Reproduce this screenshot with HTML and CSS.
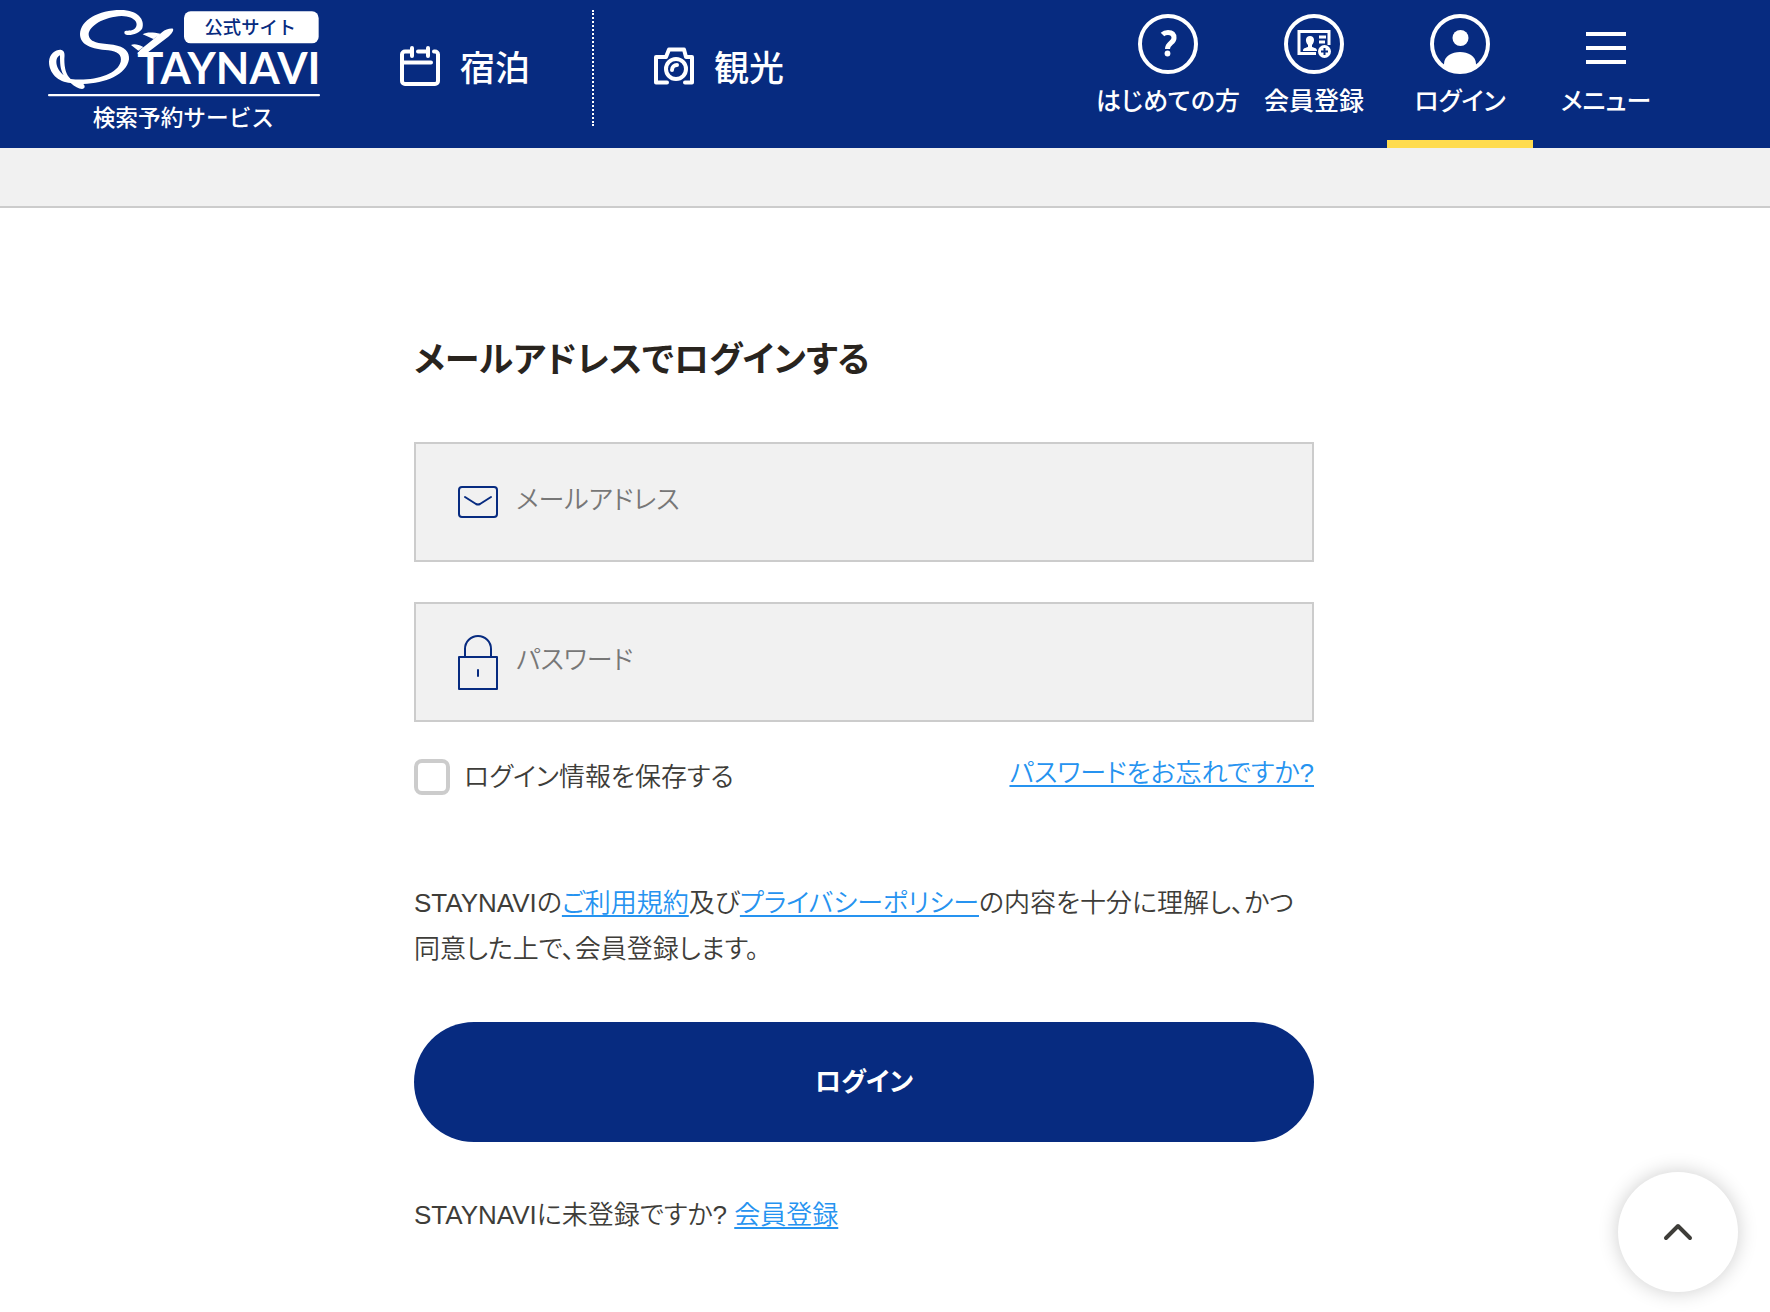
FILE: index.html
```
<!DOCTYPE html>
<html lang="ja">

<head>
  <meta charset="UTF-8" />
  <meta name="viewport" content="width=device-width, initial-scale=1" />
  <title>ログイン | STAYNAVI</title>
  <link rel="stylesheet" href="styles.css">
</head>

<body>
  <header class="header">
    <a class="logo" href="#">
      <svg viewBox="54 30 816 390" role="img" aria-label="STAYNAVI 検索予約サービス">
        <path fill-rule="evenodd" d="M283 98C283 88 300 96 312 88C330 74 318 49 275 48C222 50 176 78 176 104C178 130 215 130 250 134C285 140 299 155 297 178C290 225 225 250 160 252C166 258 166 266 156 267C146 267 134 260 122 249C85 246 57 220 57 185C58 160 78 148 92 149C106 152 104 165 103 178C103 205 108 225 122 237C185 245 262 225 272 185C277 165 262 154 235 151C185 147 150 135 150 102C152 60 205 30 272 30C325 30 345 60 337 85C328 105 283 112 283 98ZM90 166C74 172 74 204 101 226C90 208 90 188 90 166Z" />
        <path d="M429 86C420 84 405 89 397 96L330 150L322 162L350 160L414 111C424 102 432 92 429 86ZM338 103C350 95 370 97 391 101L370 117ZM303 135C312 130 325 133 340 141L325 152Z" />
        <rect x="462" y="34" width="404" height="96" rx="20" />
        <text class="logo-badge" x="661" y="102" text-anchor="middle">公式サイト</text>
        <text class="logo-name" x="322" y="251">TAYNAVI</text>
        <rect x="54" y="282" width="816" height="7" rx="3" />
        <text class="logo-sub" x="460" y="377" text-anchor="middle">検索予約サービス</text>
      </svg>
    </a>

    <nav class="nav">
      <a href="#">
        <svg class="nav-icon" viewBox="0 0 40 40">
          <path d="M9 5.500H5a3 3 0 0 0-3 3V35a3 3 0 0 0 3 3h30a3 3 0 0 0 3-3V8.500a3 3 0 0 0-3-3h-1M18 5.500h8M12 2v8M28 2v8M12 5.500H9M26 5.500h2M3 16.500h28" />
        </svg>
        宿泊
      </a>
      <a href="#">
        <svg class="nav-icon" viewBox="0 0 40 40">
          <path d="M13 36.500H2V11h10l3-7.500h15l2 7.500h6v25.500h-7" />
          <circle cx="22" cy="23" r="10" />
          <path d="M18 24a5 5 0 0 1 5-5" />
        </svg>
        観光
      </a>
    </nav>

    <ul class="menu">
      <li>
        <a href="#">
          <svg class="menu-icon" viewBox="0 0 60 60">
            <circle cx="30" cy="30" r="28" />
            <path class="mark" d="M24.500 20.500c2-2 4-2 5.500-2 4 0 6 2 6 5.500 0 5-6.500 5-6.500 11" />
            <circle class="fill" cx="29.500" cy="39.500" r="2.900" />
          </svg>
          はじめての方
        </a>
      </li>
      <li>
        <a href="#">
          <svg class="menu-icon" viewBox="0 0 60 60">
            <circle cx="30" cy="30" r="28" />
            <path class="thin" d="M32 39.500H15V17.500h30V31M35 23h7M35 28h6" />
            <path class="fill" d="M26 22c5 0 5 6 2 9v2c3 1 5 1 5 4H19c0-3 2-3 5-4v-2c-3-3-3-9 2-9z" />
            <circle class="fill" cx="40.500" cy="37.500" r="6.500" />
            <path class="plus" d="M40.500 34v7M37 37.500h7" />
          </svg>
          会員登録
        </a>
      </li>
      <li class="active">
        <a href="#">
          <svg class="menu-icon" viewBox="0 0 60 60">
            <circle cx="30" cy="30" r="28" />
            <circle class="fill" cx="30.500" cy="24" r="8" />
            <path class="fill" d="M14 52v-2c0-8 8-12 16-12s16 4 16 12v2c-9 9-23 9-32 0z" />
          </svg>
          ログイン
        </a>
      </li>
      <li>
        <button type="button">
          <svg class="menu-icon" viewBox="0 0 60 60">
            <path d="M10 20h40M10 34h40M10 48h40" />
          </svg>
          メニュー
        </button>
      </li>
    </ul>
  </header>

  <div class="breadcrumb"></div>

  <main class="main">
    <form class="login">
      <h1>メールアドレスでログインする</h1>

      <label class="field">
        <svg width="40" height="56" viewBox="0 0 40 56">
          <rect x="1" y="13" width="38" height="30" rx="3" />
          <path d="M7 23l11 7q2 1 4 0l11-7" />
        </svg>
        <input type="email" placeholder="メールアドレス" aria-label="メールアドレス">
      </label>

      <label class="field">
        <svg width="40" height="56" viewBox="0 0 40 56">
          <rect x="1" y="23" width="38" height="32" />
          <path d="M7 23v-8a13 13 0 0 1 26 0v8M20 36v6" />
        </svg>
        <input type="password" placeholder="パスワード" aria-label="パスワード">
      </label>

      <div class="options">
        <label class="save"><input type="checkbox">ログイン情報を保存する</label>
        <a href="#">パスワードをお忘れですか?</a>
      </div>

      <p class="terms">STAYNAVIの<a href="#">ご利用規約</a>及び<a href="#">プライバシーポリシー</a>の内容を十分に理解し、かつ同意した上で、会員登録します。</p>

      <button class="btn-login" type="submit">ログイン</button>

      <p class="register">STAYNAVIに未登録ですか? <a href="#">会員登録</a></p>
    </form>
  </main>

  <a class="page-top" href="#" aria-label="ページの先頭へ">
    <svg width="30" height="18" viewBox="0 0 30 18">
      <path d="M3 15L15 3l12 12" />
    </svg>
  </a>
</body>

</html>
```
FILE: styles.css
```
* {
  box-sizing: border-box;
}

body {
  margin: 0;
  font-family: "Liberation Sans", "Noto Sans CJK JP", sans-serif;
  font-feature-settings: "palt";
  font-size: 26px;
  font-weight: 350;
  line-height: 46px;
  color: #3e3d39;
  background: #fff;
}

a {
  color: #2693f0;
  text-decoration-thickness: 2px;
  text-underline-offset: 3px;
}

button,
input {
  font: inherit;
  font-feature-settings: inherit;
}

/* header */
.header {
  display: flex;
  align-items: stretch;
  height: 148px;
  padding: 0 91px 0 48px;
  background: #072b80;
}

.header a,
.header button {
  color: #fff;
  text-decoration: none;
}

.logo svg {
  display: block;
  width: 272px;
  height: 130px;
  margin-top: 10px;
  fill: #fff;
}

.logo-name {
  font-family: Lato, sans-serif;
  font-size: 131px;
  font-weight: 700;
}

.logo-badge,
.logo-sub {
  font-family: "Noto Sans CJK JP", sans-serif;
  font-feature-settings: normal;
  font-weight: 500;
}

.logo-badge {
  font-size: 55px;
  fill: #072b80;
}

.logo-sub {
  font-size: 68px;
}

.nav {
  display: flex;
  padding: 10px 0 22px 18px;
  font-family: "Noto Sans CJK JP", sans-serif;
}

.nav a {
  display: flex;
  align-items: center;
  gap: 20px;
  padding: 0 62px 4px;
  font-size: 35px;
  font-weight: 500;
}

.nav a + a {
  padding-left: 60px;
  border-left: 2px dotted #fff;
}

.nav-icon {
  width: 40px;
  height: 40px;
  fill: none;
  stroke: #fff;
  stroke-width: 4;
  stroke-linecap: round;
  stroke-linejoin: round;
}

.menu {
  display: flex;
  margin: 0 0 0 auto;
  padding: 0;
  list-style: none;
}

.menu li {
  width: 146px;
  border-bottom: 8px solid transparent;
}

.menu .active {
  border-color: #ffdc50;
}

.menu a,
.menu button {
  display: flex;
  flex-direction: column;
  align-items: center;
  gap: 4px;
  width: 100%;
  padding: 14px 0 0;
  border: 0;
  background: none;
  font-size: 25px;
  font-weight: 500;
  white-space: nowrap;
}

.menu-icon {
  width: 60px;
  height: 60px;
  fill: none;
  stroke: #fff;
  stroke-width: 4;
}

.menu-icon .fill {
  fill: #fff;
  stroke: none;
}

.menu-icon .mark {
  stroke-width: 5;
}

.menu-icon .thin {
  stroke-width: 3;
}

.menu-icon .plus {
  stroke: #072b80;
  stroke-width: 2;
}

.breadcrumb {
  height: 60px;
  background: #f1f1f1;
  border-bottom: 2px solid #ccc;
}

/* login form */
.main {
  padding: 126px 42px 72px 0;
}

.login {
  max-width: 900px;
  margin: 0 auto;
}

.login h1 {
  margin: 0 0 56px;
  font-size: 35px;
  font-weight: 700;
  line-height: 52px;
  color: #29241e;
}

.field {
  display: flex;
  align-items: center;
  gap: 18px;
  height: 120px;
  margin-bottom: 40px;
  padding: 0 42px;
  background: #f1f1f1;
  border: 2px solid #ccc;
}

.field svg {
  fill: none;
  stroke: #072b80;
  stroke-width: 2;
  stroke-linecap: round;
  stroke-linejoin: round;
}

.field input {
  flex: 1;
  padding: 0 0 4px;
  border: 0;
  outline: 0;
  background: none;
}

.field input::placeholder {
  color: #777;
}

.options {
  display: flex;
  justify-content: space-between;
  margin-top: -12px;
}

.save {
  display: flex;
  align-items: center;
  gap: 14px;
  padding-top: 4px;
}

.save input {
  appearance: none;
  width: 36px;
  height: 36px;
  margin: 0;
  border: 4px solid #ccc;
  border-radius: 8px;
}

.save input:checked {
  background: #072b80;
}

.terms {
  margin: 80px 0 50px;
}

.btn-login {
  display: block;
  width: 100%;
  height: 120px;
  border: 0;
  border-radius: 60px;
  background: #072b80;
  color: #fff;
  font-weight: 700;
}

.register {
  margin: 50px 0 0;
}

/* back to top */
.page-top {
  position: fixed;
  right: 32px;
  bottom: 20px;
  display: flex;
  align-items: center;
  justify-content: center;
  width: 120px;
  height: 120px;
  border-radius: 50%;
  background: #fff;
  box-shadow: 0 0 20px rgba(0, 0, 0, 0.2);
}

.page-top svg {
  fill: none;
  stroke: #3e3d39;
  stroke-width: 4;
  stroke-linecap: round;
  stroke-linejoin: round;
}
```
